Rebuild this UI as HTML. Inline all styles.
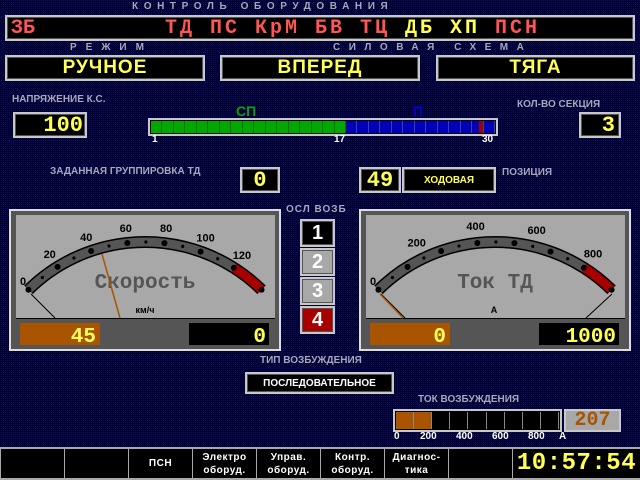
<!DOCTYPE html>
<html><head><meta charset="utf-8"><style>
*{margin:0;padding:0;box-sizing:border-box}
body{width:640px;height:480px;overflow:hidden;position:relative;background:#000;
background-image:conic-gradient(#0000b0 0 25%,#000 0 50%,#00004a 0 75%,#000 0);background-size:2px 2px;
font-family:"Liberation Sans",sans-serif;font-weight:bold}
.a{position:absolute}
.lbl{position:absolute;color:#a8a8b8;font-size:10px;white-space:nowrap;line-height:10px}
.box{position:absolute;background:#000;border:2px solid #c8c8c8;box-shadow:inset 0 0 0 1px #555;color:#ffff55;font-weight:bold;display:flex;align-items:center;justify-content:center;white-space:nowrap}
.num{font-family:"Liberation Mono",monospace;font-weight:bold;color:#ffff55}
</style></head><body>
<div class="lbl" style="left:132px;top:2px;letter-spacing:5.6px;font-size:10px">КОНТРОЛЬ ОБОРУДОВАНИЯ</div>
<div class="box" style="left:5px;top:15px;width:630px;height:26px;justify-content:flex-start;font-size:20px;color:#ff5555;font-family:'Liberation Mono',monospace">
<span style="position:absolute;left:4px">ЗБ</span>
<span style="position:absolute;left:158px;letter-spacing:3px">ТД ПС КрМ БВ ТЦ <span style="color:#ffff55">ДБ ХП</span> ПСН</span></div>
<div class="lbl" style="left:70px;top:43px;letter-spacing:9px">РЕЖИМ</div>
<div class="lbl" style="left:333px;top:43px;letter-spacing:8.5px">СИЛОВАЯ СХЕМА</div>
<div class="box" style="left:5px;top:55px;width:200px;height:26px;font-size:19px;letter-spacing:1px">РУЧНОЕ</div>
<div class="box" style="left:220px;top:55px;width:200px;height:26px;font-size:19px;letter-spacing:1px">ВПЕРЕД</div>
<div class="box" style="left:436px;top:55px;width:199px;height:26px;font-size:19px;letter-spacing:1px">ТЯГА</div>
<div class="lbl" style="left:12px;top:95px">НАПРЯЖЕНИЕ К.С.</div>
<div class="box num" style="left:13px;top:112px;width:74px;height:26px;font-size:22px;justify-content:flex-end;padding-right:2px">100</div>
<div class="a" style="left:236px;top:103px;color:#00a800;font-size:14px">СП</div>
<div class="a" style="left:413px;top:103px;color:#0000d0;font-size:14px">П</div>
<div class="a" style="left:148px;top:118px;width:350px;height:18px;border:2px solid #c8c8c8;background:#000;padding:1px">
<div id="bar" style="display:flex;height:100%"></div></div>
<div class="a" style="left:152px;top:134px;color:#fff;font-size:10px">1</div>
<div class="a" style="left:334px;top:134px;color:#fff;font-size:10px">17</div>
<div class="a" style="left:482px;top:134px;color:#fff;font-size:10px">30</div>
<div class="lbl" style="left:517px;top:100px">КОЛ-ВО СЕКЦИЯ</div>
<div class="box num" style="left:579px;top:112px;width:42px;height:26px;font-size:22px;justify-content:flex-end;padding-right:4px">3</div>
<div class="lbl" style="left:50px;top:167px">ЗАДАННАЯ ГРУППИРОВКА ТД</div>
<div class="box num" style="left:240px;top:167px;width:40px;height:26px;font-size:22px">0</div>
<div class="box num" style="left:359px;top:167px;width:42px;height:26px;font-size:22px">49</div>
<div class="box" style="left:402px;top:167px;width:94px;height:26px;font-size:10px">ХОДОВАЯ</div>
<div class="lbl" style="left:502px;top:168px">ПОЗИЦИЯ</div>
<div class="lbl" style="left:286px;top:205px;letter-spacing:1px">ОСЛ ВОЗБ</div>
<div class="box" style="left:300px;top:219px;width:35px;height:28px;font-size:20px;color:#fff;background:#000">1</div>
<div class="box" style="left:300px;top:248px;width:35px;height:28px;font-size:20px;color:#fff;background:#a8a8a8">2</div>
<div class="box" style="left:300px;top:277px;width:35px;height:28px;font-size:20px;color:#fff;background:#a8a8a8">3</div>
<div class="box" style="left:300px;top:306px;width:35px;height:28px;font-size:20px;color:#fff;background:#a80000">4</div>
<svg class="a" style="left:0;top:0" width="640" height="480" id="g"></svg>
<div class="lbl" style="left:260px;top:356px">ТИП ВОЗБУЖДЕНИЯ</div>
<div class="box" style="left:245px;top:372px;width:149px;height:22px;font-size:10px;color:#fff">ПОСЛЕДОВАТЕЛЬНОЕ</div>
<div class="lbl" style="left:418px;top:395px">ТОК ВОЗБУЖДЕНИЯ</div>
<div class="a" style="left:393px;top:409px;width:169px;height:23px;border:2px solid #c8c8c8;background:#000;padding:1px;display:flex" id="ex"></div>
<div class="a num" style="left:564px;top:409px;width:57px;height:23px;border:2px solid #c8c8c8;background:#a8a8a8;color:#a85400;font-size:20px;text-align:center;line-height:19px">207</div>
<div class="a" style="left:394px;top:431px;color:#fff;font-size:10px">0</div>
<div class="a" style="left:420px;top:431px;color:#fff;font-size:10px">200</div>
<div class="a" style="left:456px;top:431px;color:#fff;font-size:10px">400</div>
<div class="a" style="left:492px;top:431px;color:#fff;font-size:10px">600</div>
<div class="a" style="left:528px;top:431px;color:#fff;font-size:10px">800</div>
<div class="a" style="left:559px;top:431px;color:#fff;font-size:10px">А</div>
<div class="a" style="left:0;top:447px;width:640px;height:33px;background:#a8a8a8;display:flex;padding:2px 0 2px 1px;gap:1px" id="bot"></div>
<script>
var bar=document.getElementById('bar'),h='';
for(var i=1;i<=30;i++){var c=i<=17?'#00a800':'#0000b8';h+='<div style="flex:1;background-color:'+c+';border-right:1px solid '+(i<=17?'#007000':'#4040a8')+';'+(i==29?'display:flex;justify-content:flex-end':'')+'">'+(i==29?'<div style="width:4px;background:#a00000"></div>':'')+'</div>';}
bar.innerHTML=h;
var ex='';for(var i=0;i<9;i++)ex+='<div style="flex:1;background:'+(i<2?'#a85400':'#000')+';border-right:1px solid #888"></div>';
document.getElementById('ex').innerHTML=ex;
var cells=['','','ПСН','Электро<br>оборуд.','Управ.<br>оборуд.','Контр.<br>оборуд.','Диагнос-<br>тика','',''],bh='';
cells.forEach(function(t,i){bh+='<div style="'+(i==8?'flex:1;':'width:63px;')+'background:#000;color:#fff;font-size:10px;line-height:13px;display:flex;align-items:center;justify-content:center;text-align:center;letter-spacing:.5px">'+(i==8?'<span style="color:#ffff55;font-family:Liberation Mono,monospace;font-size:24px;font-weight:bold">10:57:54</span>':t)+'</div>';});
document.getElementById('bot').innerHTML=bh;
function gauge(ox,labels,step,name,unit,val,val2,needle,rline){
 var cx=ox+135,cy=408,R=166,s='';
 s+='<rect x="'+ox+'" y="210" width="270" height="140" fill="#555" stroke="#ddd" stroke-width="2"/>';
 s+='<rect x="'+(ox+6)+'" y="215" width="259" height="103" fill="#a8a8a8"/>';
 s+='<line x1="'+(ox+6)+'" y1="318.5" x2="'+(ox+265)+'" y2="318.5" stroke="#000"/>';
 function P(a,r){a=a*Math.PI/180;return [cx+r*Math.cos(a),cy-r*Math.sin(a)];}
 function arc(a1,a2,col){var p=P(a1,R),q=P(a2,R);return '<path d="M'+p[0]+' '+p[1]+' A'+R+' '+R+' 0 0 1 '+q[0]+' '+q[1]+'" fill="none" stroke="#000" stroke-width="12"/><path d="M'+p[0]+' '+p[1]+' A'+R+' '+R+' 0 0 1 '+q[0]+' '+q[1]+'" fill="none" stroke="'+col+'" stroke-width="9"/>';}
 var a0=134.6,aE=45.4,aR=a0-6*12.83;
 s+=arc(a0,aR,'#555')+arc(aR,aE,'#a80000');
 for(var k=0;k<=12;k++){var a=a0-k*6.415,p=P(a,R);s+='<circle cx="'+p[0]+'" cy="'+p[1]+'" r="'+(k%2?1.6:3)+'" fill="#000"/>';}
 var e=P(aE,R);s+='<circle cx="'+e[0]+'" cy="'+e[1]+'" r="3" fill="#000"/>';
 labels.forEach(function(l,k){if(l===null)return;var a=a0-k*step,p=P(a,R+15);if(k==0)p=[ox+13,281];s+='<text x="'+p[0]+'" y="'+(p[1]+4)+'" font-size="11" text-anchor="middle" font-family="Liberation Sans" font-weight="bold">'+l+'</text>';});
 s+='<text x="'+cx+'" y="288" font-size="21" text-anchor="middle" fill="#555" font-family="Liberation Mono" font-weight="bold">'+name+'</text>';
 s+='<text x="'+(ox+(unit=='А'?134:135))+'" y="313" font-size="9" text-anchor="middle" font-family="Liberation Sans" font-weight="bold">'+unit+'</text>';
 s+='<line x1="'+(ox+21)+'" y1="294" x2="'+(ox+45)+'" y2="318" stroke="#000"/>';
 if(rline)s+='<line x1="'+(ox+252)+'" y1="294" x2="'+(ox+226)+'" y2="318" stroke="#000"/>';
 s+='<line x1="'+needle[0]+'" y1="'+needle[1]+'" x2="'+needle[2]+'" y2="318" stroke="#a85400" stroke-width="1.5"/>';
 s+='<rect x="'+(ox+10)+'" y="323" width="80" height="22" fill="#a85400"/><text x="'+(ox+86)+'" y="342" fill="#ffff55" font-size="21" text-anchor="end" font-family="Liberation Mono" font-weight="bold">'+val+'</text>';
 s+='<rect x="'+(ox+179)+'" y="323" width="80" height="22" fill="#000"/><text x="'+(ox+256)+'" y="342" fill="#ffff55" font-size="21" text-anchor="end" font-family="Liberation Mono" font-weight="bold">'+val2+'</text>';
 return s;}
document.getElementById('g').innerHTML=gauge(10,['0','20','40','60','80','100','120'],12.83,'Скорость','км/ч','45','0',[102,254,120],false)+
 gauge(360,['0',null,null,null,null,null,null],12.83,'Ток ТД','А','0','1000',[380,294,403],true)+
 (function(){var s='',cx=495,cy=408,R=183,a0=134.6;[['200',1],['400',2],['600',3],['800',4]].forEach(function(l){var a=(a0-l[1]*19.25)*Math.PI/180;s+='<text x="'+(cx+R*Math.cos(a))+'" y="'+(cy-R*Math.sin(a)+4)+'" font-size="11" text-anchor="middle" font-family="Liberation Sans" font-weight="bold">'+l[0]+'</text>';});return s;})();
</script>
</body></html>
